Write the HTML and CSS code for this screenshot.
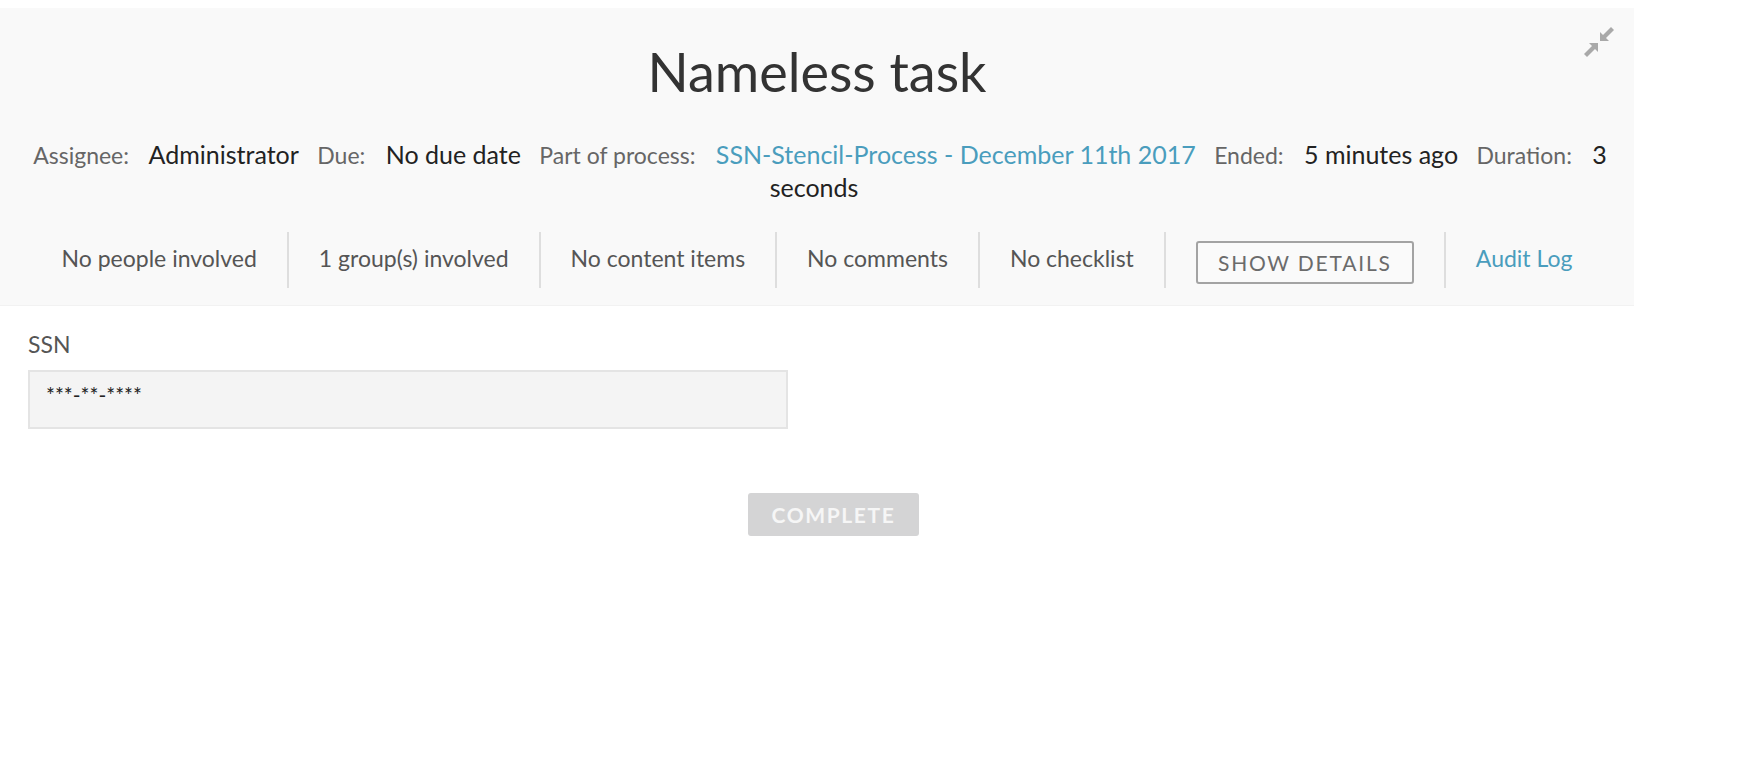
FILE: index.html
```html
<!DOCTYPE html>
<html>
<head>
<meta charset="utf-8">
<title>Nameless task</title>
<link rel="stylesheet" href="styles.css">
</head>
<body>
<div class="task-header">
  <button class="collapse-btn" title="Collapse">
    <svg width="32" height="32" viewBox="0 0 32 32" aria-hidden="true">
      <path d="M17 6 L17 15 L26 15 Z" fill="#a9a9a9"/>
      <path d="M20.5 11.5 L29.5 2.5" stroke="#a9a9a9" stroke-width="4.2"/>
      <path d="M15 17 L15 26 L6 17 Z" fill="#a9a9a9"/>
      <path d="M11.5 20.5 L2.5 29.5" stroke="#a9a9a9" stroke-width="4.2"/>
    </svg>
  </button>
  <h1 class="task-title">Nameless task</h1>
  <div class="task-meta">
    <span class="meta-item"><span class="meta-label">Assignee:</span> <span class="meta-value">Administrator</span></span>
    <span class="meta-item"><span class="meta-label">Due:</span> <span class="meta-value">No due date</span></span>
    <span class="meta-item"><span class="meta-label">Part of process:</span> <a class="meta-link" href="#">SSN-Stencil-Process - December 11th 2017</a></span>
    <span class="meta-item"><span class="meta-label">Ended:</span> <span class="meta-value">5 minutes ago</span></span>
    <span class="meta-item"><span class="meta-label">Duration:</span> <span class="meta-value">3 seconds</span></span>
  </div>
  <div class="task-tabs">
    <div class="tab">No people involved</div>
    <div class="tab">1 group(s) involved</div>
    <div class="tab">No content items</div>
    <div class="tab">No comments</div>
    <div class="tab">No checklist</div>
    <div class="tab"><button class="details-btn">Show details</button></div>
    <div class="tab"><a class="tab-link" href="#">Audit Log</a></div>
  </div>
</div>
<div class="task-form">
  <label class="field-label">SSN</label>
  <div class="field-box">***-**-****</div>
  <div class="form-actions">
    <button class="complete-btn">Complete</button>
  </div>
</div>
</body>
</html>
```
FILE: styles.css
```css
html, body {
  margin: 0;
  padding: 0;
  background: #ffffff;
  font-family: Lato, "Open Sans", sans-serif;
  color: #333;
}

.task-header {
  position: relative;
  margin-top: 8px;
  width: 1634px;
  background: #f9f9f9;
  border-bottom: 1px solid #f2f2f2;
  padding: 31px 0 17px;
  box-sizing: border-box;
  text-align: center;
}

.collapse-btn {
  position: absolute;
  top: 18px;
  right: 19px;
  width: 32px;
  height: 32px;
  padding: 0;
  border: 0;
  background: none;
}

.collapse-btn svg { display: block; }

.task-title {
  margin: 0;
  font-size: 54px;
  font-weight: 400;
  line-height: 65px;
  color: #333;
}

.task-meta {
  margin-top: 34px;
  padding: 0 16px;
  line-height: 33px;
  font-size: 25px;
}

.meta-item {
  margin: 0 6px;
}

.meta-label {
  color: #666;
  font-size: 23px;
  line-height: 1;
  margin-right: 14px;
}

.meta-value {
  color: #222;
}

.meta-link {
  color: #4a9dbd;
  text-decoration: none;
}

.task-tabs {
  margin-top: 28px;
  display: flex;
  justify-content: center;
  align-items: stretch;
}

.tab {
  height: 56px;
  box-sizing: border-box;
  padding: 0 30px 4px;
  display: flex;
  align-items: center;
  font-size: 23px;
  color: #555;
  border-left: 2px solid #dedede;
}

.tab:first-child { border-left: 0; }

.details-btn {
  margin-top: 8px;
  width: 218px;
  height: 43px;
  border: 2px solid #a3a3a3;
  border-radius: 3px;
  background: #fafafa;
  font-family: Lato, sans-serif;
  font-size: 21px;
  letter-spacing: 1.8px;
  text-transform: uppercase;
  color: #6b6b6b;
  padding: 0;
}

.tab-link {
  color: #4a9dbd;
  text-decoration: none;
}

.task-form {
  width: 1611px;
  padding: 26px 0 0 28px;
}

.field-label {
  display: block;
  font-size: 23px;
  line-height: 25px;
  color: #555;
}

.field-box {
  margin-top: 13px;
  width: 760px;
  height: 59px;
  box-sizing: border-box;
  border: 2px solid #e4e4e4;
  background: #f4f4f4;
  padding: 10px 16px;
  font-family: Lato, sans-serif;
  font-size: 21px;
  line-height: 25px;
  color: #222;
}

.form-actions {
  margin-top: 64px;
  display: flex;
  justify-content: center;
}

.complete-btn {
  width: 171px;
  height: 43px;
  border: 0;
  border-radius: 3px;
  background: #d4d4d5;
  color: #f6f6f6;
  font-family: Lato, sans-serif;
  font-weight: 700;
  font-size: 21px;
  letter-spacing: 1.6px;
  text-transform: uppercase;
  padding: 0;
}
```
